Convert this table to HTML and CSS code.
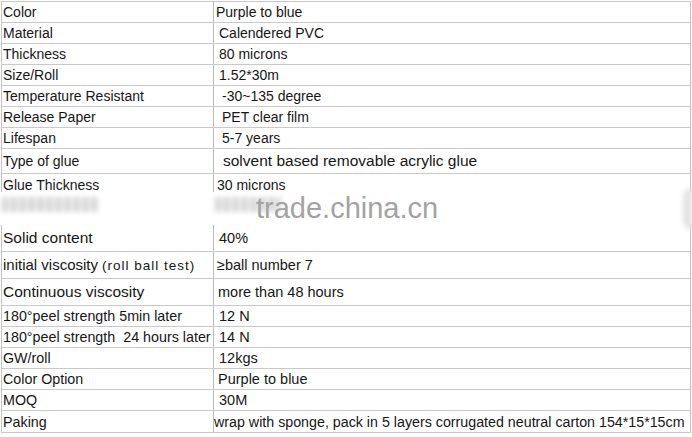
FILE: index.html
```html
<!DOCTYPE html>
<html>
<head>
<meta charset="utf-8">
<link rel="stylesheet" href="styles.css">
</head>
<body>
<div class="sheet">
  <div class="top">
    <div class="row"><div class="k">Color</div><div class="v p2">Purple to blue</div></div>
    <div class="row"><div class="k">Material</div><div class="v p5">Calendered PVC</div></div>
    <div class="row"><div class="k">Thickness</div><div class="v p5">80 microns</div></div>
    <div class="row"><div class="k">Size/Roll</div><div class="v p5">1.52*30m</div></div>
    <div class="row"><div class="k">Temperature Resistant</div><div class="v p8">-30~135 degree</div></div>
    <div class="row"><div class="k">Release Paper</div><div class="v p8">PET clear film</div></div>
    <div class="row"><div class="k">Lifespan</div><div class="v p8">5-7 years</div></div>
    <div class="row tall"><div class="k">Type of glue</div><div class="v big p9">solvent based removable acrylic glue</div></div>
    <div class="row last"><div class="k">Glue Thickness</div><div class="v p3">30 microns</div></div>
  </div>
  <div class="band">
    <span class="blob b1"></span>
    <span class="blob b2"></span>
    <span class="blob b3"></span>
  </div>
  <div class="bottom">
    <div class="row r27"><div class="k big">Solid content</div><div class="v p5">40%</div></div>
    <div class="row r27"><div class="k"><span class="mid">initial viscosity</span> <span class="small">(roll ball test)</span></div><div class="v p3">&ge;ball number 7</div></div>
    <div class="row r27"><div class="k big">Continuous viscosity</div><div class="v p4">more than 48 hours</div></div>
    <div class="row"><div class="k">180°peel strength 5min later</div><div class="v p5">12 N</div></div>
    <div class="row"><div class="k">180°peel strength&nbsp; 24 hours later</div><div class="v p5">14 N</div></div>
    <div class="row"><div class="k">GW/roll</div><div class="v p5">12kgs</div></div>
    <div class="row"><div class="k">Color Option</div><div class="v p4">Purple to blue</div></div>
    <div class="row"><div class="k">MOQ</div><div class="v p5">30M</div></div>
    <div class="row r22"><div class="k">Paking</div><div class="v p0 narrow">wrap with sponge, pack in 5 layers corrugated neutral carton 154*15*15cm</div></div>
  </div>
  <div class="watermark">trade.china.cn</div>
</div>
</body>
</html>
```

FILE: styles.css
```css
html, body {
  margin: 0;
  padding: 0;
  background: #ffffff;
}

body {
  font-family: "Liberation Sans", Arial, sans-serif;
  color: #161616;
}

.sheet {
  position: relative;
  width: 692px;
  height: 437px;
  overflow: hidden;
}

.top {
  margin-top: 1px;
  margin-left: 1px;
  width: 690px;
  box-sizing: border-box;
  border-top: 1px solid #c9c9c9;
  border-left: 1px solid #c4c4c4;
  border-right: 1px solid #c4c4c4;
}

.bottom {
  margin-left: 1px;
  width: 690px;
  box-sizing: border-box;
  border-left: 1px solid #c4c4c4;
  border-right: 1px solid #c4c4c4;
}

.row {
  display: grid;
  grid-template-columns: 212px 1fr;
  height: 21px;
  box-sizing: border-box;
  border-bottom: 1px solid #c9c9c9;
}

.k,
.v {
  font-size: 14px;
  line-height: 20px;
  white-space: nowrap;
}

.k {
  border-right: 1px solid #bcbcbc;
  padding-left: 1px;
}

.row.tall { height: 25px; }
.row.tall .k,
.row.tall .v { line-height: 24px; }

.row.last {
  height: 18px;
  border-bottom: none;
}
.row.last .k,
.row.last .v {
  padding-top: 5px;
  line-height: 13px;
}

.row.r27 { height: 27px; }
.row.r27 .k,
.row.r27 .v { line-height: 26px; }

.row.r22 { height: 22px; }
.row.r22 .k,
.row.r22 .v { line-height: 22px; }

.bottom .v { font-size: 14.5px; }
.bottom .k { font-size: 14.3px; }
.bottom .v.narrow { font-size: 14.25px; }

.big { font-size: 15.5px !important; }
.mid { font-size: 15px; }
.small { font-size: 13.5px; letter-spacing: 1px; }

.p0 { padding-left: 0; }
.p2 { padding-left: 2px; }
.p3 { padding-left: 3px; }
.p4 { padding-left: 4px; }
.p5 { padding-left: 5px; }
.p8 { padding-left: 8px; }
.p9 { padding-left: 9px; }

.band {
  display: flex;
  align-items: flex-start;
  height: 33px;
}

.blob {
  display: block;
  filter: blur(2.5px);
  background: repeating-linear-gradient(90deg, #d6d6d6 0 5px, #ebebeb 5px 9px);
}

.b1 {
  margin-top: 5px;
  margin-left: 2px;
  width: 96px;
  height: 15px;
}

.b2 {
  margin-top: 5px;
  margin-left: 117px;
  width: 66px;
  height: 15px;
}

.b3 {
  margin-left: auto;
  width: 9px;
  height: 42px;
  margin-top: -4px;
  border-radius: 10px 0 0 10px;
  background: #e2e2e2;
}

.watermark {
  position: absolute;
  left: 256px;
  top: 194px;
  font-size: 29px;
  line-height: 29px;
  color: #a3a3a3;
  white-space: nowrap;
}
```
